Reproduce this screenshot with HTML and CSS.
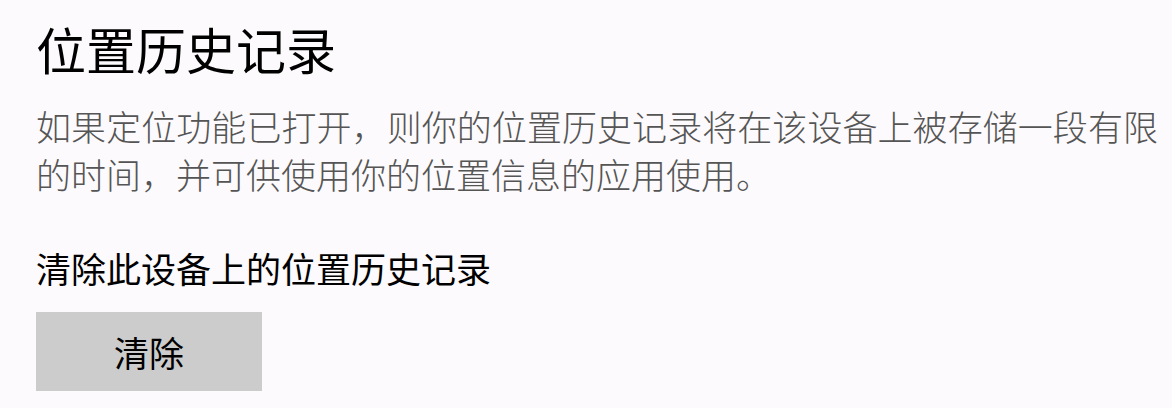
FILE: index.html
```html
<!DOCTYPE html>
<html lang="zh-CN">
<head>
<meta charset="utf-8">
<title>位置历史记录</title>
<link rel="stylesheet" href="styles.css">
</head>
<body>
<main class="page">
  <h1 class="title">位置历史记录</h1>
  <p class="desc">如果定位功能已打开，则你的位置历史记录将在该设备上被存储一段有限的时间，并可供使用你的位置信息的应用使用。</p>
  <h2 class="subtitle">清除此设备上的位置历史记录</h2>
  <button class="btn" type="button">清除</button>
</main>
</body>
</html>
```

FILE: styles.css
```css
html, body {
  margin: 0;
  padding: 0;
  background: #fcfafc;
}
body {
  font-family: "Noto Sans CJK SC", "Noto Sans", sans-serif;
  color: #000;
}
.page {
  display: flex;
  flex-direction: column;
  align-items: flex-start;
  padding: 18px 0 0 36px;
}
.title {
  margin: 0;
  font-size: 50px;
  font-weight: 400;
  line-height: 60px;
  color: #000;
}
.desc {
  margin: 24px 0 0 0;
  width: 1122px;
  font-size: 35px;
  font-weight: 300;
  line-height: 48px;
  color: #555;
  text-align: justify;
}
.subtitle {
  margin: 46px 0 0 0;
  font-size: 35px;
  font-weight: 400;
  line-height: 48px;
  color: #000;
}
.btn {
  margin-top: 20px;
  width: 226px;
  height: 79px;
  padding: 0;
  border: none;
  background: #cccccc;
  font-family: inherit;
  font-size: 35px;
  font-weight: 400;
  line-height: 79px;
  color: #000;
}
```
